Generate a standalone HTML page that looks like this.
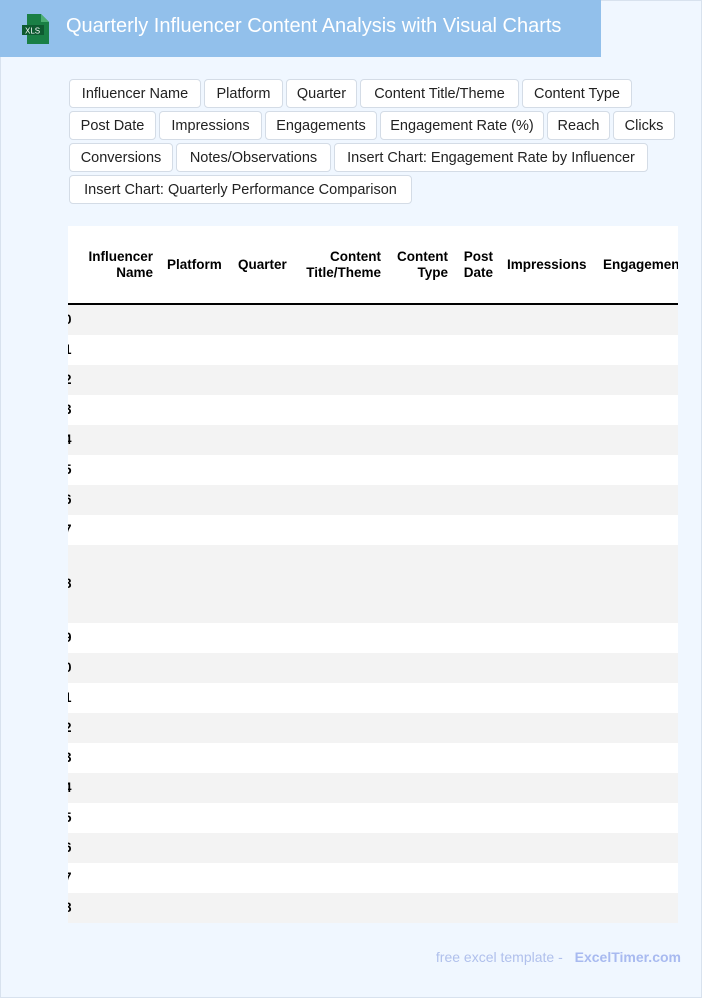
<!DOCTYPE html>
<html><head><meta charset="utf-8"><style>
*{box-sizing:border-box;margin:0;padding:0}
body{width:702px;height:998px;background:#f0f7ff;font-family:"Liberation Sans",Arial,sans-serif;position:relative;overflow:hidden;box-shadow:inset 0 0 0 1px #d8e2ee}
.hdr{position:absolute;left:0;top:0;width:601px;height:57px;background:#92c0eb}
.hdr h1{position:absolute;left:66px;top:15px;font-size:20px;font-weight:normal;color:#fff;white-space:nowrap}
.btns{position:absolute;left:69px;top:79px;width:612px;display:flex;flex-wrap:wrap;gap:3px}
.b{height:29px;background:#fff;border:1px solid #d4dce6;border-radius:4px;font-size:14.5px;color:#222;display:flex;align-items:center;justify-content:center;white-space:nowrap}
.tbl{position:absolute;left:68px;top:226px;width:610px;height:697px;background:#fff;overflow:hidden}
.th{position:absolute;font-weight:bold;font-size:13.5px;color:#000;line-height:16px;text-align:right;white-space:nowrap}
.line{position:absolute;left:0;top:77px;width:610px;height:1.5px;background:#000}
.r{position:absolute;left:0;width:610px;height:30px}
.r span{position:absolute;left:-4px;top:7px;font-weight:bold;font-size:13.5px}
.g{background:#f3f3f3}
.ft{position:absolute;right:21px;top:949px;font-size:14px;color:#b0c0ec}
.ft b{color:#a8baf0;margin-left:8px}
</style></head><body>
<div class="hdr">
<svg style="position:absolute;left:22px;top:14px" width="28" height="30" viewBox="0 0 28 30"><path d="M5 0h14l8 8v22H5z" fill="#1a7f45"/><path d="M19 0v8h8z" fill="#4caf73"/><rect x="0" y="11" width="22" height="10" fill="#0e5a30"/><text x="3" y="19.5" font-family="Liberation Sans" font-size="8" fill="#fff">XLS</text></svg>
<h1>Quarterly Influencer Content Analysis with Visual Charts</h1></div>
<div class="btns">
<div class="b" style="width:132px">Influencer Name</div><div class="b" style="width:79px">Platform</div><div class="b" style="width:71px">Quarter</div><div class="b" style="width:159px">Content Title/Theme</div><div class="b" style="width:110px">Content Type</div>
<div class="b" style="width:87px">Post Date</div><div class="b" style="width:103px">Impressions</div><div class="b" style="width:112px">Engagements</div><div class="b" style="width:164px">Engagement Rate (%)</div><div class="b" style="width:63px">Reach</div><div class="b" style="width:62px">Clicks</div>
<div class="b" style="width:104px">Conversions</div><div class="b" style="width:155px">Notes/Observations</div><div class="b" style="width:314px">Insert Chart: Engagement Rate by Influencer</div>
<div class="b" style="width:343px">Insert Chart: Quarterly Performance Comparison</div>
</div>
<div class="tbl">
<div class="th" style="right:525px;top:23px">Influencer<br>Name</div>
<div class="th" style="left:99px;top:31px">Platform</div>
<div class="th" style="left:170px;top:31px">Quarter</div>
<div class="th" style="right:297px;top:23px">Content<br>Title/Theme</div>
<div class="th" style="right:230px;top:23px">Content<br>Type</div>
<div class="th" style="right:185px;top:23px;text-align:left">Post<br>Date</div>
<div class="th" style="left:439px;top:31px">Impressions</div>
<div class="th" style="left:535px;top:31px">Engagements</div>
<div class="line"></div>
<div class="r g" style="top:79px"><span>0</span></div>
<div class="r" style="top:109px"><span>1</span></div>
<div class="r g" style="top:139px"><span>2</span></div>
<div class="r" style="top:169px"><span>3</span></div>
<div class="r g" style="top:199px"><span>4</span></div>
<div class="r" style="top:229px"><span>5</span></div>
<div class="r g" style="top:259px"><span>6</span></div>
<div class="r" style="top:289px"><span>7</span></div>
<div class="r g" style="top:319px;height:78px"><span style="top:31px">8</span></div>
<div class="r" style="top:397px"><span>9</span></div>
<div class="r g" style="top:427px"><span>0</span></div>
<div class="r" style="top:457px"><span>1</span></div>
<div class="r g" style="top:487px"><span>2</span></div>
<div class="r" style="top:517px"><span>3</span></div>
<div class="r g" style="top:547px"><span>4</span></div>
<div class="r" style="top:577px"><span>5</span></div>
<div class="r g" style="top:607px"><span>6</span></div>
<div class="r" style="top:637px"><span>7</span></div>
<div class="r g" style="top:667px"><span>8</span></div>
</div>
<div class="ft">free excel template - <b>ExcelTimer.com</b></div>
</body></html>
